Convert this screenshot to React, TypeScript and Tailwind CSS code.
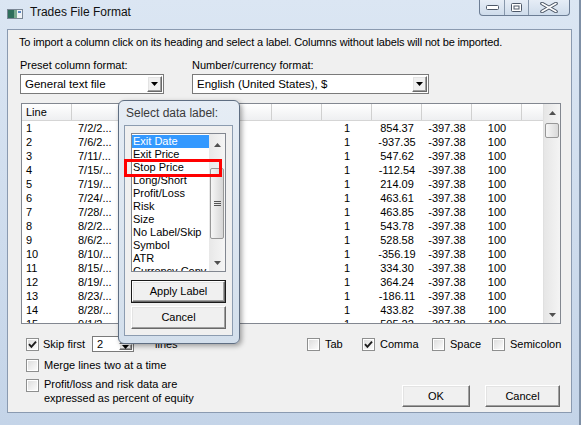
import React from "react";

const rows: [string, string, string][] = [
  ["1", "7/2/2...", "854.37"],
  ["2", "7/6/2...", "-937.35"],
  ["3", "7/11/...", "547.62"],
  ["4", "7/15/...", "-112.54"],
  ["5", "7/19/...", "214.09"],
  ["6", "7/24/...", "463.61"],
  ["7", "7/28/...", "463.85"],
  ["8", "8/2/2...", "543.78"],
  ["9", "8/6/2...", "528.58"],
  ["10", "8/10/...", "-356.19"],
  ["11", "8/15/...", "334.30"],
  ["12", "8/19/...", "364.24"],
  ["13", "8/23/...", "-186.11"],
  ["14", "8/28/...", "433.82"],
  ["15", "9/1/2...", "505.22"],
];

const labels = [
  "Exit Date",
  "Exit Price",
  "Stop Price",
  "Long/Short",
  "Profit/Loss",
  "Risk",
  "Size",
  "No Label/Skip",
  "Symbol",
  "ATR",
  "Currency Conv",
];

const raised =
  "flex items-center justify-center bg-[#f0f0f0] border border-t-white border-l-white border-r-[#696969] border-b-[#696969] shadow-[inset_-1px_-1px_0_#a0a0a0,inset_1px_1px_0_#e3e3e3]";

const CheckBox: React.FC<{ checked?: boolean }> = ({ checked }) => (
  <span className="w-[13px] h-[13px] shrink-0 border border-[#8e8f8f] bg-white p-px flex">
    <span className="flex-1 bg-gradient-to-br from-[#dedede] to-[#fbfbfb] flex items-center justify-center">
      {checked && (
        <svg width="9" height="9" viewBox="0 0 9 9">
          <path d="M1 4.2 L3.4 6.8 L8 1.6" fill="none" stroke="#1c1c1c" strokeWidth="1.9" />
        </svg>
      )}
    </span>
  </span>
);

const Arrow: React.FC<{ up?: boolean; color?: string }> = ({ up, color = "#000" }) => (
  <svg width="7" height="4" viewBox="0 0 7 4">
    <path d={up ? "M0 4 L3.5 0 L7 4 Z" : "M0 0 L7 0 L3.5 4 Z"} fill={color} />
  </svg>
);

const Combo: React.FC<{ text: string; w: string }> = ({ text, w }) => (
  <div className={`${w} h-[20px] border border-[#7a7a7a] bg-white flex items-stretch p-px`}>
    <div className="flex-1 pl-[3px] leading-[16px] text-[11.5px]">{text}</div>
    <div className={`${raised} w-[15px]`}>
      <Arrow />
    </div>
  </div>
);

export default function App() {
  return (
    <div className="relative w-[581px] h-[425px] overflow-hidden bg-gradient-to-b from-[#dbe6f3] to-[#c4d4e8] font-['Liberation_Sans',Arial,sans-serif] text-[11px] text-black border-r-2 border-[#7f90a6]">
      {/* title bar */}
      <div className="h-[29px] flex items-start">
        <svg className="ml-[7px] mt-[9px]" width="16" height="10" viewBox="0 0 16 10">
          <rect x="0.5" y="0.5" width="15" height="9" fill="#eef2f6" stroke="#7b8795" />
          <rect x="1" y="1" width="6" height="8" fill="#2f6e5b" />
          <rect x="7" y="1" width="3" height="8" fill="#78a88f" />
          <rect x="11" y="2" width="3" height="2" fill="#5a86c2" />
        </svg>
        <span className="ml-[7px] mt-[5px] text-[12px] leading-[15px] text-[#111]">Trades File Format</span>
        <div className="ml-auto mr-[9px] flex h-[16px] border border-t-0 border-[#6c7d94] rounded-b-[4px] overflow-hidden bg-gradient-to-b from-[#e6edf6] to-[#cfdceb]">
          <div className="w-[25px] border-r border-[#8797ab] flex items-center justify-center">
            <svg width="13" height="5" viewBox="0 0 13 5">
              <rect x="0.5" y="0.5" width="12" height="4" rx="1" fill="#fff" stroke="#4d5868" />
            </svg>
          </div>
          <div className="w-[24px] border-r border-[#8797ab] flex items-center justify-center">
            <svg width="11" height="9" viewBox="0 0 11 9">
              <rect x="0.5" y="0.5" width="10" height="8" rx="1" fill="#fff" stroke="#4d5868" />
              <rect x="3" y="3" width="5" height="3" fill="none" stroke="#4d5868" />
            </svg>
          </div>
          <div className="w-[40px] flex items-center justify-center">
            <svg width="18" height="11" viewBox="0 0 18 11">
              <path d="M2 1.5 L16 9.5 M16 1.5 L2 9.5" stroke="#4d5868" strokeWidth="3.6" strokeLinecap="round" />
              <path d="M2 1.5 L16 9.5 M16 1.5 L2 9.5" stroke="#fff" strokeWidth="1.6" strokeLinecap="round" />
            </svg>
          </div>
        </div>
      </div>

      {/* client area */}
      <div className="ml-[7px] w-[565px] h-[384px] border border-[#8a9ab0] bg-[#f0f0f0] flex flex-col">
        <div className="pl-[11px] pt-[6px] leading-[13px] tracking-[-0.14px]">
          To import a column click on its heading and select a label. Columns without labels will not be imported.
        </div>

        <div className="pl-[12px] mt-[10px] flex gap-[28px]">
          <div className="flex flex-col">
            <div className="leading-[13px]">Preset column format:</div>
            <div className="mt-[2px]">
              <Combo text="General text file" w="w-[144px]" />
            </div>
          </div>
          <div className="flex flex-col">
            <div className="leading-[13px]">Number/currency format:</div>
            <div className="mt-[2px]">
              <Combo text="English (United States), $" w="w-[237px]" />
            </div>
          </div>
        </div>

        {/* data grid */}
        <div className="ml-[13px] mt-[9px] w-[540px] h-[221px] border border-[#828790] bg-white flex">
          <div className="flex-1 flex flex-col overflow-hidden">
            <div className="h-[17px] shrink-0 flex bg-gradient-to-b from-white to-[#eeeff1] border-b border-[#d5d5d5]">
              {Array.from({ length: 10 }).map((_, i) => (
                <div key={i} className="w-[50px] shrink-0 border-r border-[#d0d0d0] pl-[4px] leading-[16px]">
                  {i === 0 ? "Line" : ""}
                </div>
              ))}
            </div>
            {rows.map(([n, d, v]) => (
              <div key={n} className="h-[14px] shrink-0 flex leading-[14px]">
                <div className="w-[50px] shrink-0 pl-[4px]">{n}</div>
                <div className="w-[50px] shrink-0 pl-[6px]">{d}</div>
                <div className="w-[200px] shrink-0" />
                <div className="w-[50px] shrink-0 text-center">1</div>
                <div className="w-[50px] shrink-0 text-center">{v}</div>
                <div className="w-[50px] shrink-0 text-center">-397.38</div>
                <div className="w-[50px] shrink-0 text-center">100</div>
              </div>
            ))}
          </div>
          <div className="w-[17px] shrink-0 flex flex-col bg-gradient-to-r from-[#e6e6e6] to-[#f4f4f4] border-l border-[#e0e0e0]">
            <div className="h-[17px] flex items-center justify-center">
              <Arrow up color="#505050" />
            </div>
            <div className="flex-1 px-px pt-[2px]">
              <div className="h-[15px] rounded-[2px] border border-[#979797] bg-gradient-to-r from-[#f6f6f6] to-[#d9d9d9]" />
            </div>
            <div className="h-[17px] flex items-center justify-center">
              <Arrow color="#505050" />
            </div>
          </div>
        </div>

        {/* options row */}
        <div className="mt-[11px] h-[18px] flex items-center">
          <div className="w-[299px] shrink-0 flex items-center pl-[18px]">
            <CheckBox checked />
            <span className="ml-[4px] w-[49px]">Skip first</span>
            <div className="w-[42px] h-[16px] border border-[#7a7a7a] bg-white flex p-px">
              <span className="flex-1 pl-[3px] leading-[13px]">2</span>
              <div className="w-[13px] flex flex-col">
                <div className={`${raised} flex-1`}>
                  <Arrow up />
                </div>
                <div className={`${raised} flex-1`}>
                  <Arrow />
                </div>
              </div>
            </div>
            <span className="ml-[21px]">lines</span>
          </div>
          <div className="w-[55px] shrink-0 flex items-center">
            <CheckBox />
            <span className="ml-[5px]">Tab</span>
          </div>
          <div className="w-[70px] shrink-0 flex items-center">
            <CheckBox checked />
            <span className="ml-[5px]">Comma</span>
          </div>
          <div className="w-[60px] shrink-0 flex items-center">
            <CheckBox />
            <span className="ml-[5px]">Space</span>
          </div>
          <div className="flex items-center">
            <CheckBox />
            <span className="ml-[5px]">Semicolon</span>
          </div>
        </div>

        <div className="mt-[3px] h-[18px] flex items-center pl-[18px]">
          <CheckBox />
          <span className="ml-[5px]">Merge lines two at a time</span>
        </div>

        <div className="mt-[3px] flex">
          <div className="w-[394px] shrink-0 flex pl-[18px]">
            <span className="mt-[2px]">
              <CheckBox />
            </span>
            <span className="ml-[5px] leading-[14px]">
              Profit/loss and risk data are
              <br />
              expressed as percent of equity
            </span>
          </div>
          <div className={`${raised} mt-[8px] w-[68px] h-[22px]`}>OK</div>
          <div className={`${raised} mt-[8px] ml-[15px] w-[75px] h-[22px]`}>Cancel</div>
        </div>
      </div>

      {/* select data label popup */}
      <div className="absolute left-[118px] top-[100px] w-[122px] h-[244px] rounded-[6px] border border-[#5f6e82] bg-gradient-to-b from-[#e6edf5] to-[#d3dfec] shadow-[2px_2px_5px_rgba(0,0,0,0.35)] flex flex-col">
        <div className="h-[24px] pl-[7px] pt-[5px] text-[12px] leading-[14px] text-[#3a3a3a]">Select data label:</div>
        <div className="ml-[5px] w-[109px] h-[211px] border border-[#8c9cb0] bg-[#f0f0f0] flex flex-col pl-[6px] pt-[7px]">
          <div className="w-[95px] h-[139px] border border-[#828790] bg-white flex">
            <div className="w-[77px] shrink-0 pt-px overflow-hidden">
              {labels.map((l, i) => (
                <div
                  key={l}
                  className={`h-[13px] leading-[13px] pl-px whitespace-nowrap ${i === 0 ? "bg-[#3399ff] text-white" : ""}`}
                >
                  {l}
                </div>
              ))}
            </div>
            <div className="w-[16px] shrink-0 flex flex-col bg-gradient-to-r from-[#e8e8e8] to-[#f5f5f5]">
              <div className="h-[17px] flex items-end justify-center pb-[4px]">
                <Arrow up color="#505050" />
              </div>
              <div className="flex-1 px-px pt-[17px] pb-[15px]">
                <div className="h-[71px] rounded-[2px] border border-[#979797] bg-gradient-to-r from-[#f6f6f6] to-[#d6d6d6] flex flex-col items-center justify-center gap-px">
                  <span className="w-[7px] h-px bg-[#555]" />
                  <span className="w-[7px] h-px bg-[#555]" />
                  <span className="w-[7px] h-px bg-[#555]" />
                </div>
              </div>
              <div className="h-[17px] flex items-center justify-center">
                <Arrow color="#505050" />
              </div>
            </div>
          </div>
          <div className="mt-[8px] w-[95px] h-[23px] border border-[#1a1a1a] flex">
            <div className={`${raised} flex-1`}>Apply Label</div>
          </div>
          <div className={`${raised} mt-[3px] w-[95px] h-[23px]`}>Cancel</div>
        </div>
      </div>

      {/* highlight annotation */}
      <div className="absolute left-[124px] top-[159px] w-[98px] h-[18px] border-[3px] border-[#ff0000]" />
    </div>
  );
}
